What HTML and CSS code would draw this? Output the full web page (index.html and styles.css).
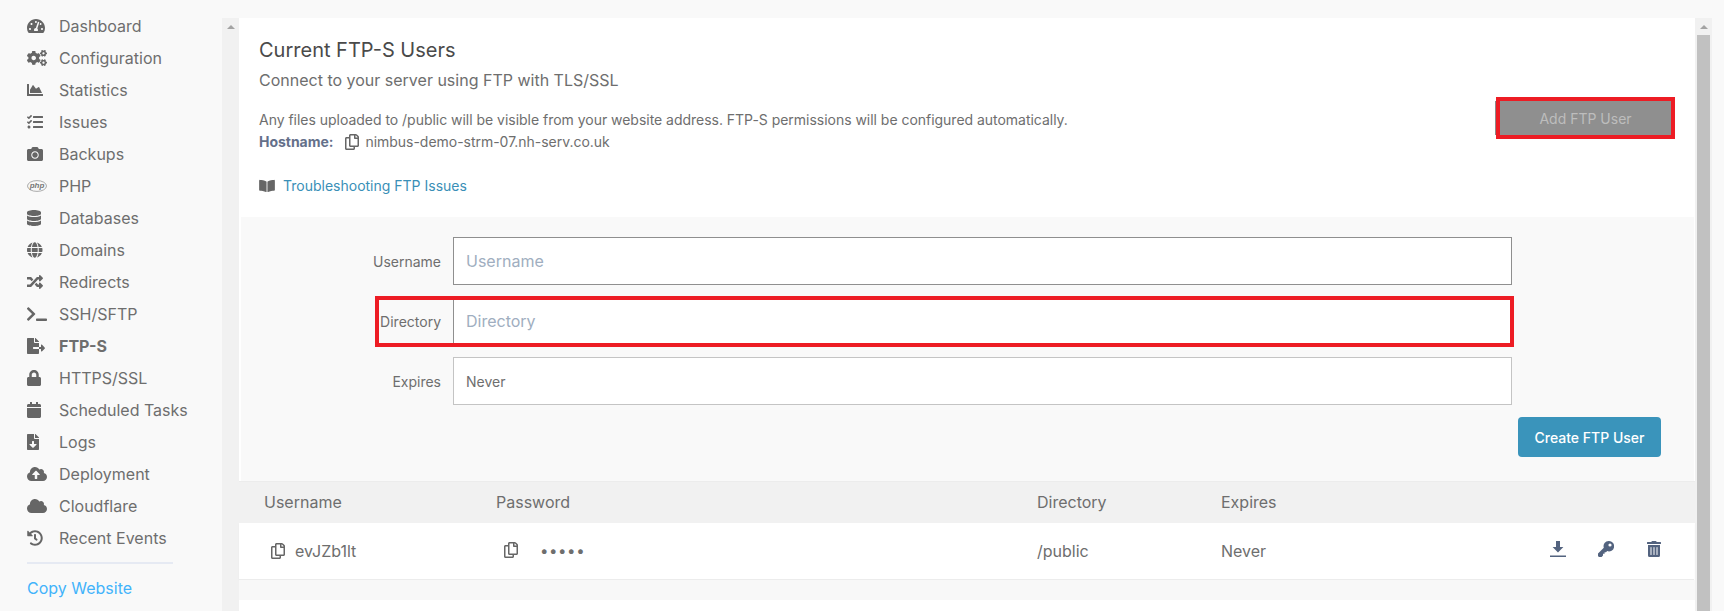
FILE: index.html
```html
<!DOCTYPE html>
<html lang="en">
<head>
<meta charset="utf-8">
<title>FTP-S Users</title>
<link rel="stylesheet" href="styles.css">
</head>
<body>
<svg class="defs" aria-hidden="true">
  <symbol id="i-copy" viewBox="0 0 448 512"><path d="M433.941 65.941l-51.882-51.882A48 48 0 0 0 348.118 0H176c-26.51 0-48 21.49-48 48v48H48c-26.51 0-48 21.49-48 48v320c0 26.51 21.49 48 48 48h224c26.51 0 48-21.49 48-48v-48h80c26.51 0 48-21.49 48-48V99.882a48 48 0 0 0-14.059-33.941zM266 464H54a6 6 0 0 1-6-6V150a6 6 0 0 1 6-6h74v224c0 26.51 21.49 48 48 48h96v42a6 6 0 0 1-6 6zm128-96H182a6 6 0 0 1-6-6V54a6 6 0 0 1 6-6h106v88c0 13.255 10.745 24 24 24h88v202a6 6 0 0 1-6 6zm6-256h-64V48h9.632c1.591 0 3.117.632 4.243 1.757l48.368 48.368a6 6 0 0 1 1.757 4.243V112z"/></symbol>
</svg>
<div class="shell">
  <aside class="sidebar">
    <nav class="nav">
      <a class="nav-item"><span class="nav-icon"><svg class="ic" viewBox="0 0 576 512"><path d="M288 32C128.94 32 0 160.94 0 320c0 52.8 14.25 102.26 39.06 144.8 5.61 9.62 16.3 15.2 27.44 15.2h443c11.14 0 21.83-5.58 27.44-15.2C561.75 422.26 576 372.8 576 320c0-159.06-128.94-288-288-288zm0 64c14.71 0 26.58 10.13 30.32 23.65-1.11 2.26-2.64 4.23-3.39 6.67l-9.22 27.67c-5.13 3.49-10.97 6.01-17.71 6.01-17.67 0-32-14.33-32-32S270.33 96 288 96zM96 384c-17.67 0-32-14.33-32-32s14.33-32 32-32 32 14.33 32 32-14.33 32-32 32zm48-160c-17.67 0-32-14.33-32-32s14.33-32 32-32 32 14.33 32 32-14.33 32-32 32zm246.77-72.41l-61.33 184C343.13 347.33 352 364.54 352 384c0 11.72-3.38 22.55-8.88 32H232.88c-5.5-9.45-8.88-20.28-8.88-32 0-33.94 26.5-61.43 59.9-63.59l61.34-184.01c4.17-12.56 17.73-19.45 30.36-15.17 12.57 4.19 19.35 17.79 15.17 30.36zm14.66 57.2l15.52-46.55c3.47-1.29 7.13-2.23 11.05-2.23 17.67 0 32 14.33 32 32s-14.33 32-32 32c-11.38-.01-20.89-6.28-26.57-15.22zM480 384c-17.67 0-32-14.33-32-32s14.33-32 32-32 32 14.33 32 32-14.33 32-32 32z"/></svg></span>Dashboard</a>
      <a class="nav-item"><span class="nav-icon"><svg class="ic" viewBox="0 0 640 512"><path d="M512.1 191l-8.2 14.3c-3 5.3-9.4 7.5-15.1 5.4-11.8-4.4-22.6-10.7-32.1-18.6-4.6-3.8-5.8-10.5-2.8-15.7l8.2-14.3c-6.9-8-12.3-17.3-15.9-27.4h-16.5c-6 0-11.2-4.3-12.2-10.3-2-12-2.1-24.6 0-37.1 1-6 6.2-10.4 12.2-10.4h16.5c3.6-10.1 9-19.4 15.9-27.4l-8.2-14.3c-3-5.2-1.9-11.9 2.8-15.7 9.5-7.9 20.4-14.2 32.1-18.6 5.7-2.1 12.1.1 15.1 5.4l8.2 14.3c10.5-1.9 21.2-1.9 31.7 0L552 6.3c3-5.3 9.4-7.5 15.1-5.4 11.8 4.4 22.6 10.7 32.1 18.6 4.6 3.8 5.8 10.5 2.8 15.7l-8.2 14.3c6.9 8 12.3 17.3 15.9 27.4h16.5c6 0 11.2 4.3 12.2 10.3 2 12 2.1 24.6 0 37.1-1 6-6.2 10.4-12.2 10.4h-16.5c-3.6 10.1-9 19.4-15.9 27.4l8.2 14.3c3 5.2 1.9 11.9-2.8 15.7-9.5 7.9-20.4 14.2-32.1 18.6-5.7 2.1-12.1-.1-15.1-5.4l-8.2-14.3c-10.4 1.9-21.2 1.9-31.7 0zm-10.5-58.8c38.5 29.6 82.4-14.3 52.8-52.8-38.5-29.7-82.4 14.3-52.8 52.8zM386.3 286.1l33.7 16.8c10.1 5.8 14.5 18.1 10.5 29.1-8.9 24.2-26.4 46.4-42.6 65.8-7.4 8.9-20.2 11.1-30.3 5.3l-29.1-16.8c-16 13.7-34.6 24.6-54.9 31.7v33.6c0 11.6-8.3 21.6-19.7 23.6-24.6 4.2-50.4 4.4-75.9 0-11.5-2-20-11.9-20-23.6V418c-20.3-7.2-38.9-18-54.9-31.7L74 403c-10 5.8-22.9 3.6-30.3-5.3-16.2-19.4-33.3-41.6-42.2-65.7-4-10.9.4-23.2 10.5-29.1l33.3-16.8c-3.9-20.9-3.9-42.4 0-63.4L12 205.8c-10.1-5.8-14.6-18.1-10.5-29 8.9-24.2 26-46.4 42.2-65.8 7.4-8.9 20.2-11.1 30.3-5.3l29.1 16.8c16-13.7 34.6-24.6 54.9-31.7V57.1c0-11.5 8.2-21.5 19.6-23.5 24.6-4.2 50.5-4.4 76-.1 11.5 2 20 11.9 20 23.6v33.6c20.3 7.2 38.9 18 54.9 31.7l29.1-16.8c10-5.8 22.9-3.6 30.3 5.3 16.2 19.4 33.2 41.6 42.1 65.8 4 10.9.1 23.2-10 29.1l-33.7 16.8c3.9 21 3.9 42.5 0 63.5zm-117.6 21.1c59.2-77-28.7-164.9-105.7-105.7-59.2 77 28.7 164.9 105.7 105.7zm243.4 182.7l-8.2 14.3c-3 5.3-9.4 7.5-15.1 5.4-11.8-4.4-22.6-10.7-32.1-18.6-4.6-3.8-5.8-10.5-2.8-15.7l8.2-14.3c-6.9-8-12.3-17.3-15.9-27.4h-16.5c-6 0-11.2-4.3-12.2-10.3-2-12-2.1-24.6 0-37.1 1-6 6.2-10.4 12.2-10.4h16.5c3.6-10.1 9-19.4 15.9-27.4l-8.2-14.3c-3-5.2-1.9-11.9 2.8-15.7 9.5-7.9 20.4-14.2 32.1-18.6 5.7-2.1 12.1.1 15.1 5.4l8.2 14.3c10.5-1.9 21.2-1.9 31.7 0l8.2-14.3c3-5.3 9.4-7.5 15.1-5.4 11.8 4.4 22.6 10.7 32.1 18.6 4.6 3.8 5.8 10.5 2.8 15.7l-8.2 14.3c6.9 8 12.3 17.3 15.9 27.4h16.5c6 0 11.2 4.3 12.2 10.3 2 12 2.1 24.6 0 37.1-1 6-6.2 10.4-12.2 10.4h-16.5c-3.6 10.1-9 19.4-15.9 27.4l8.2 14.3c3 5.2 1.9 11.9-2.8 15.7-9.5 7.9-20.4 14.2-32.1 18.6-5.7 2.1-12.1-.1-15.1-5.4l-8.2-14.3c-10.4 1.9-21.2 1.9-31.7 0zM501.6 431c38.5 29.6 82.4-14.3 52.8-52.8-38.5-29.6-82.4 14.3-52.8 52.8z"/></svg></span>Configuration</a>
      <a class="nav-item"><span class="nav-icon"><svg class="ic" viewBox="0 0 512 512"><path d="M500 384c6.6 0 12 5.4 12 12v40c0 6.6-5.4 12-12 12H12c-6.6 0-12-5.4-12-12V76c0-6.6 5.4-12 12-12h40c6.6 0 12 5.4 12 12v308h436zM372.7 159.5L288 216l-85.3-113.7c-5.1-6.8-15.5-6.3-19.9 1L96 248v104h384l-89.9-187.8c-3.2-6.5-11.4-8.7-17.4-4.7z"/></svg></span>Statistics</a>
      <a class="nav-item"><span class="nav-icon"><svg class="ic" viewBox="0 0 512 512"><path d="M139.61 35.5a12 12 0 0 0-17 0L58.93 98.81l-22.7-22.12a12 12 0 0 0-17 0L3.53 92.41a12 12 0 0 0 0 17l47.59 47.4a12.78 12.78 0 0 0 17.61 0l15.59-15.62L156.52 69a12.09 12.09 0 0 0 .09-17zm0 159.19a12 12 0 0 0-17 0l-63.68 63.72-22.7-22.1a12 12 0 0 0-17 0L3.53 252a12 12 0 0 0 0 17L51 316.5a12.77 12.77 0 0 0 17.6 0l15.7-15.69 72.2-72.22a12 12 0 0 0 .09-16.9zM64 368c-26.49 0-48.59 21.5-48.59 48S37.53 464 64 464a48 48 0 0 0 0-96zm432 16H208a16 16 0 0 0-16 16v32a16 16 0 0 0 16 16h288a16 16 0 0 0 16-16v-32a16 16 0 0 0-16-16zm0-320H208a16 16 0 0 0-16 16v32a16 16 0 0 0 16 16h288a16 16 0 0 0 16-16V80a16 16 0 0 0-16-16zm0 160H208a16 16 0 0 0-16 16v32a16 16 0 0 0 16 16h288a16 16 0 0 0 16-16v-32a16 16 0 0 0-16-16z"/></svg></span>Issues</a>
      <a class="nav-item"><span class="nav-icon"><svg class="ic" viewBox="0 0 512 512"><path d="M512 144v288c0 26.5-21.5 48-48 48H48c-26.5 0-48-21.5-48-48V144c0-26.5 21.5-48 48-48h88l12.3-32.9c7-18.7 24.9-31.1 44.9-31.1h125.5c20 0 37.9 12.4 44.9 31.1L376 96h88c26.5 0 48 21.5 48 48zM376 288c0-66.2-53.8-120-120-120s-120 53.8-120 120 53.8 120 120 120 120-53.8 120-120zm-32 0c0 48.5-39.5 88-88 88s-88-39.5-88-88 39.5-88 88-88 88 39.5 88 88z"/></svg></span>Backups</a>
      <a class="nav-item"><span class="nav-icon"><svg class="ic ic-php" viewBox="0 0 20 12"><ellipse cx="10" cy="6" rx="9.5" ry="5.4"/><text x="10" y="8.4" text-anchor="middle">php</text></svg></span>PHP</a>
      <a class="nav-item"><span class="nav-icon"><svg class="ic" viewBox="0 0 448 512"><path d="M448 73.143v45.714C448 159.143 347.667 192 224 192S0 159.143 0 118.857V73.143C0 32.857 100.333 0 224 0s224 32.857 224 73.143zM448 176v102.857C448 319.143 347.667 352 224 352S0 319.143 0 278.857V176c48.125 33.143 136.208 48.572 224 48.572S399.874 209.143 448 176zm0 160v102.857C448 479.143 347.667 512 224 512S0 479.143 0 438.857V336c48.125 33.143 136.208 48.572 224 48.572S399.874 369.143 448 336z"/></svg></span>Databases</a>
      <a class="nav-item"><span class="nav-icon"><svg class="ic" viewBox="0 0 496 512"><path d="M336.5 160C322 70.7 287.8 8 248 8s-74 62.7-88.5 152h177zM152 256c0 22.2 1.2 43.5 3.3 64h185.3c2.1-20.5 3.3-41.8 3.3-64s-1.2-43.5-3.3-64H155.3c-2.1 20.5-3.3 41.8-3.3 64zm324.7-96c-28.6-67.9-86.5-120.4-158-141.6 24.4 33.8 41.2 84.7 50 141.6h108zM177.2 18.4C105.8 39.6 47.8 92.1 19.3 160h108c8.7-56.9 25.5-107.8 49.9-141.6zM487.4 192H372.7c2.1 21 3.3 42.5 3.3 64s-1.2 43-3.3 64h114.6c5.5-20.5 8.6-41.8 8.6-64s-3.1-43.5-8.5-64zM120 256c0-21.5 1.2-43 3.3-64H8.6C3.2 212.5 0 233.8 0 256s3.2 43.5 8.6 64h114.6c-2-21-3.2-42.5-3.2-64zm39.5 96c14.5 89.3 48.7 152 88.5 152s74-62.7 88.5-152h-177zm159.3 141.6c71.4-21.2 129.4-73.7 158-141.6h-108c-8.8 56.9-25.6 107.8-50 141.6zM19.3 352c28.6 67.9 86.5 120.4 158 141.6-24.4-33.8-41.2-84.7-50-141.6h-108z"/></svg></span>Domains</a>
      <a class="nav-item"><span class="nav-icon"><svg class="ic" viewBox="0 0 512 512"><path d="M504.971 359.029c9.373 9.373 9.373 24.569 0 33.941l-80 79.984c-15.01 15.01-40.971 4.49-40.971-16.971V416h-58.785a12.004 12.004 0 0 1-8.773-3.812l-70.556-75.596 53.333-57.143L352 336h32v-39.981c0-21.438 25.943-31.998 40.971-16.971l80 79.981zM12 176h84l52.781 56.551 53.333-57.143-70.556-75.596A11.999 11.999 0 0 0 122.785 96H12c-6.627 0-12 5.373-12 12v56c0 6.627 5.373 12 12 12zm372 0v39.984c0 21.46 25.961 31.98 40.971 16.971l80-79.984c9.373-9.373 9.373-24.569 0-33.941l-80-79.981C409.943 24.021 384 34.582 384 56.019V96h-58.785a12.004 12.004 0 0 0-8.773 3.812L96 336H12c-6.627 0-12 5.373-12 12v56c0 6.627 5.373 12 12 12h110.785c3.326 0 6.503-1.381 8.773-3.812L352 176h32z"/></svg></span>Redirects</a>
      <a class="nav-item"><span class="nav-icon"><svg class="ic" viewBox="0 0 640 512"><path d="M257.981 272.971L63.638 467.314c-9.373 9.373-24.569 9.373-33.941 0L7.029 444.647c-9.357-9.357-9.375-24.522-.04-33.901L161.011 256 6.99 101.255c-9.335-9.379-9.317-24.544.04-33.901l22.667-22.667c9.373-9.373 24.569-9.373 33.941 0L257.981 239.03c9.373 9.372 9.373 24.568 0 33.941zM640 456v-32c0-13.255-10.745-24-24-24H312c-13.255 0-24 10.745-24 24v32c0 13.255 10.745 24 24 24h304c13.255 0 24-10.745 24-24z"/></svg></span>SSH/SFTP</a>
      <a class="nav-item nav-item-active"><span class="nav-icon"><svg class="ic" viewBox="0 0 576 512"><path d="M384 121.9c0-6.3-2.5-12.4-7-16.9L279.1 7c-4.5-4.5-10.6-7-17-7H256v128h128zM571 308l-95.7-96.4c-10.1-10.1-27.4-3-27.4 11.3V288h-64v64h64v65.2c0 14.3 17.3 21.4 27.4 11.3L571 332c6.6-6.6 6.6-17.4 0-24zm-379 28v-32c0-8.8 7.2-16 16-16h176V160H248c-13.2 0-24-10.8-24-24V0H24C10.7 0 0 10.7 0 24v464c0 13.3 10.7 24 24 24h336c13.3 0 24-10.7 24-24V352H208c-8.8 0-16-7.2-16-16z"/></svg></span>FTP-S</a>
      <a class="nav-item"><span class="nav-icon"><svg class="ic" viewBox="0 0 448 512"><path d="M400 224h-24v-72C376 68.2 307.8 0 224 0S72 68.2 72 152v72H48c-26.5 0-48 21.5-48 48v192c0 26.5 21.5 48 48 48h352c26.5 0 48-21.5 48-48V272c0-26.5-21.5-48-48-48zm-104 0H152v-72c0-39.7 32.3-72 72-72s72 32.3 72 72v72z"/></svg></span>HTTPS/SSL</a>
      <a class="nav-item"><span class="nav-icon"><svg class="ic" viewBox="0 0 448 512"><path d="M12 192h424c6.6 0 12 5.4 12 12v260c0 26.5-21.5 48-48 48H48c-26.5 0-48-21.5-48-48V204c0-6.6 5.4-12 12-12zm436-44v-36c0-26.5-21.5-48-48-48h-48V12c0-6.6-5.4-12-12-12h-40c-6.6 0-12 5.4-12 12v52H160V12c0-6.6-5.4-12-12-12h-40c-6.6 0-12 5.4-12 12v52H48C21.5 64 0 85.5 0 112v36c0 6.6 5.4 12 12 12h424c6.6 0 12-5.4 12-12z"/></svg></span>Scheduled Tasks</a>
      <a class="nav-item"><span class="nav-icon"><svg class="ic" viewBox="0 0 384 512"><path d="M224 136V0H24C10.7 0 0 10.7 0 24v464c0 13.3 10.7 24 24 24h336c13.3 0 24-10.7 24-24V160H248c-13.2 0-24-10.8-24-24zm76.45 211.36l-96.42 95.7c-6.65 6.61-17.39 6.61-24.04 0l-96.42-95.7C73.42 337.29 80.54 320 94.82 320H160v-80c0-8.84 7.16-16 16-16h32c8.84 0 16 7.16 16 16v80h65.18c14.28 0 21.4 17.29 11.27 27.36zM377 105L279.1 7c-4.5-4.5-10.6-7-17-7H256v128h128v-6.1c0-6.3-2.5-12.4-7-16.9z"/></svg></span>Logs</a>
      <a class="nav-item"><span class="nav-icon"><svg class="ic" viewBox="0 0 640 512"><path d="M537.6 226.6c4.1-10.7 6.4-22.4 6.4-34.6 0-53-43-96-96-96-19.7 0-38.1 6-53.3 16.2C367 64.2 315.3 32 256 32c-88.4 0-160 71.6-160 160 0 2.7.1 5.4.2 8.1C40.2 219.8 0 273.2 0 336c0 79.5 64.5 144 144 144h368c70.7 0 128-57.3 128-128 0-61.9-44-113.6-102.4-125.4zM393.4 288H328v112c0 8.8-7.2 16-16 16h-48c-8.8 0-16-7.2-16-16V288h-65.4c-14.3 0-21.4-17.2-11.3-27.3l105.4-105.4c6.2-6.2 16.4-6.2 22.6 0l105.4 105.4c10.1 10.1 2.9 27.3-11.3 27.3z"/></svg></span>Deployment</a>
      <a class="nav-item"><span class="nav-icon"><svg class="ic" viewBox="0 0 640 512"><path d="M537.6 226.6c4.1-10.7 6.4-22.4 6.4-34.6 0-53-43-96-96-96-19.7 0-38.1 6-53.3 16.2C367 64.2 315.3 32 256 32c-88.4 0-160 71.6-160 160 0 2.7.1 5.4.2 8.1C40.2 219.8 0 273.2 0 336c0 79.5 64.5 144 144 144h368c70.7 0 128-57.3 128-128 0-61.9-44-113.6-102.4-125.4z"/></svg></span>Cloudflare</a>
      <a class="nav-item"><span class="nav-icon"><svg class="ic" viewBox="0 0 512 512"><path d="M504 255.531c.253 136.64-111.18 248.372-247.82 248.468-59.015.042-113.223-20.53-155.822-54.911-11.077-8.94-11.905-25.541-1.839-35.607l11.267-11.267c8.609-8.609 22.353-9.551 31.891-1.984C173.062 425.135 212.781 440 256 440c101.705 0 184-82.311 184-184 0-101.705-82.311-184-184-184-48.814 0-93.149 18.969-126.068 49.932l50.754 50.754c10.08 10.08 2.941 27.314-11.313 27.314H24c-8.837 0-16-7.163-16-16V38.627c0-14.254 17.234-21.393 27.314-11.314l49.372 49.372C129.209 34.136 189.552 8 256 8c136.81 0 247.747 110.78 248 247.531zm-180.912 78.784l9.823-12.63c8.138-10.463 6.253-25.542-4.21-33.679L288 256.349V152c0-13.255-10.745-24-24-24h-16c-13.255 0-24 10.745-24 24v135.651l65.409 50.874c10.463 8.137 25.541 6.253 33.679-4.21z"/></svg></span>Recent Events</a>
    </nav>
    <a class="copy-link">Copy Website</a>
  </aside>

  <div class="viewport">
    <div class="scrollbar"><span class="scroll-arrow"></span></div>
    <main class="panel">
      <section class="intro">
        <div class="intro-text">
          <h1 class="title">Current FTP-S Users</h1>
          <p class="subtitle">Connect to your server using FTP with TLS/SSL</p>
          <p class="note">Any files uploaded to /public will be visible from your website address. FTP-S permissions will be configured automatically.</p>
          <p class="host"><strong class="host-label">Hostname:</strong><svg class="ic-copy"><use href="#i-copy"/></svg>nimbus-demo-strm-07.nh-serv.co.uk</p>
          <p class="help"><svg class="ic-book" viewBox="0 0 576 512"><path d="M542.22 32.05c-54.8 3.11-163.72 14.43-230.96 55.59-4.64 2.84-7.27 7.89-7.27 13.17v363.87c0 11.55 12.63 18.85 23.28 13.49 69.18-34.82 169.23-44.32 218.7-46.92 16.89-.89 30.02-14.43 30.02-30.66V62.75c.01-17.71-15.35-31.74-33.77-30.7zM264.73 87.64C197.5 46.48 88.58 35.17 33.78 32.05 15.36 31.01 0 45.04 0 62.75V400.6c0 16.24 13.13 29.78 30.02 30.66 49.49 2.6 149.59 12.11 218.77 46.95 10.62 5.35 23.21-1.94 23.21-13.46V100.63c0-5.29-2.62-10.09-7.27-12.99z"/></svg><a class="help-link">Troubleshooting FTP Issues</a></p>
        </div>
        <button class="btn-add" type="button">Add FTP User</button>
      </section>

      <form class="form">
        <div class="field">
          <label class="field-label">Username</label>
          <input class="field-input field-input-hover" placeholder="Username">
        </div>
        <div class="field field-marked">
          <label class="field-label">Directory</label>
          <input class="field-input field-input-hover" placeholder="Directory">
        </div>
        <div class="field">
          <label class="field-label">Expires</label>
          <input class="field-input field-input-value" value="Never">
        </div>
        <div class="form-actions"><button class="btn-create" type="button">Create FTP User</button></div>
      </form>

      <div class="table">
        <div class="table-row table-head">
          <span>Username</span><span>Password</span><span>Directory</span><span>Expires</span><span></span>
        </div>
        <div class="table-row table-body">
          <span class="cell-user"><svg class="ic-copy"><use href="#i-copy"/></svg>evJZb1lt</span>
          <span class="cell-pass"><svg class="ic-copy"><use href="#i-copy"/></svg><span class="dots">•••••</span></span>
          <span>/public</span>
          <span>Never</span>
          <span class="actions">
            <svg class="ic-act" viewBox="0 0 16 16"><path d="M6 0h4v6h3.4L8 11.5 2.6 6H6zM0 14.4h16V16H0z"/></svg>
            <svg class="ic-act" viewBox="0 0 16 16"><path d="M10.8 0a5.2 5.2 0 1 1-1.6 10.1L8 11.3H6.6v1.5H5v1.6L3.6 16H.9L0 15.1v-2.5l5.8-5.8A5.2 5.2 0 0 1 10.8 0zm1.2 2.4a1.6 1.6 0 1 0 0 3.2 1.6 1.6 0 0 0 0-3.2z"/></svg>
            <svg class="ic-act" viewBox="0 0 448 512"><path d="M32 464a48 48 0 0 0 48 48h288a48 48 0 0 0 48-48V128H32zm272-256a16 16 0 0 1 32 0v224a16 16 0 0 1-32 0zm-96 0a16 16 0 0 1 32 0v224a16 16 0 0 1-32 0zm-96 0a16 16 0 0 1 32 0v224a16 16 0 0 1-32 0zM432 32H312l-9.4-18.7A24 24 0 0 0 281.1 0H166.8a23.72 23.72 0 0 0-21.4 13.3L136 32H16A16 16 0 0 0 0 48v32a16 16 0 0 0 16 16h416a16 16 0 0 0 16-16V48a16 16 0 0 0-16-16z"/></svg>
          </span>
        </div>
      </div>
      <div class="spacer"></div>
    </main>
    <div class="scrollbar scrollbar-right"><span class="scroll-arrow"></span><span class="scroll-thumb"></span></div>
  </div>
</div>
</body>
</html>
```

FILE: styles.css
```css
*, *::after { box-sizing: border-box; }

html, body {
  margin: 0;
  height: 611px;
  overflow: hidden;
}

body {
  background: #f9f9f9;
  color: #6e6e6e;
  font-family: Inter, "Liberation Sans", sans-serif;
  font-size: 14px;
}

.defs { display: none; }

.shell {
  display: flex;
  height: 611px;
}

/* sidebar */
.sidebar {
  flex: 0 0 222px;
  padding: 10px 0 0 27px;
}

.nav { display: flex; flex-direction: column; }

.nav-item {
  display: flex;
  align-items: center;
  height: 32px;
  font-size: 16px;
}

.nav-item-active { font-weight: 700; }

.nav-icon {
  flex: 0 0 32px;
  display: flex;
  align-items: center;
}

.ic { height: 16px; width: auto; fill: #666; display: block; }

.ic-php { height: 12px; fill: none; }
.ic-php ellipse { stroke: #8a8a8a; stroke-width: .7; }
.ic-php text {
  fill: #777;
  font-family: "Liberation Sans", sans-serif;
  font-size: 8px;
  font-style: italic;
  font-weight: 700;
}

.copy-link {
  display: block;
  width: 146px;
  margin-top: 8px;
  padding-top: 15px;
  border-top: 2px solid #e6eaf3;
  color: #42b3fb;
  font-size: 16px;
  line-height: 19px;
}

/* main viewport */
.viewport {
  flex: 0 0 1490px;
  display: flex;
  margin-top: 18px;
  height: 593px;
}

.scrollbar {
  flex: 0 0 17px;
  background: #f1f1f1;
  padding-top: 7px;
  display: flex;
  flex-direction: column;
  align-items: center;
}

.scroll-arrow {
  width: 0;
  height: 0;
  border: 4px solid transparent;
  border-top: 0;
  border-bottom: 4px solid #a3a3a3;
}

.scroll-thumb {
  flex: 1;
  width: 13px;
  margin-top: 6px;
  background: #c1c1c1;
}

.panel {
  flex: 0 0 1456px;
  background: #fff;
  display: flex;
  flex-direction: column;
}

/* intro */
.intro {
  flex: 0 0 199px;
  display: flex;
  justify-content: space-between;
  align-items: flex-start;
  padding: 20px 24px 0 20px;
}

.title {
  margin: 0;
  color: #4a4a4a;
  font-size: 20px;
  font-weight: 400;
  line-height: 24px;
}

.subtitle {
  margin: 7px 0 0;
  font-size: 16px;
  line-height: 22px;
}

.note {
  margin: 18px 0 0;
  line-height: 22px;
  letter-spacing: -.025px;
}

.host {
  display: flex;
  align-items: center;
  margin: 0;
  line-height: 22px;
  letter-spacing: -.025px;
}

.host-label { color: #64708a; margin-right: 12px; }

.ic-copy {
  width: 14px;
  height: 16px;
  fill: #666;
  flex: none;
}

.host .ic-copy { margin-right: 6px; }

.help {
  display: flex;
  align-items: center;
  margin: 22px 0 0;
  line-height: 22px;
}

.ic-book { width: 16px; height: 14px; fill: #666; margin-right: 8px; }

.help-link { color: #3a8fb7; }

.btn-add {
  width: 171px;
  height: 34px;
  margin-top: 63px;
  border: 0;
  background: #8f8f8f;
  color: #bdbdbd;
  font: 14px Inter, "Liberation Sans", sans-serif;
  outline: 4px solid #ed1c24;
  box-shadow: -5px 0 0 #8a8a8a;
}

/* form */
.form {
  flex: 0 0 264px;
  margin: 0 1px 0 2px;
  padding: 20px 33px 0 0;
  background: #f9f9f9;
}

.field {
  position: relative;
  display: grid;
  grid-template-columns: 200px 1059px;
  column-gap: 12px;
  align-items: center;
  margin-bottom: 12px;
  justify-content: start;
}

.field-label { text-align: right; }

.field-marked::after {
  content: "";
  position: absolute;
  left: 134px;
  top: -1px;
  width: 1139px;
  height: 51px;
  border: 4px solid #ed1c24;
  pointer-events: none;
}

.field-input {
  height: 48px;
  padding: 0 12px;
  border: 1px solid #c4c4c4;
  background: #fff;
  color: #6e6e6e;
  font: 16px Inter, "Liberation Sans", sans-serif;
}

.field-input::placeholder { color: #a0aec0; opacity: 1; }

.field-input-hover { border-color: #8f8f8f; }
.field-input-value { font-size: 14px; }

.form-actions {
  display: flex;
  justify-content: flex-end;
}

.btn-create {
  width: 143px;
  height: 40px;
  border: 0;
  border-radius: 4px;
  background: #3a94bb;
  color: #fff;
  font: 500 14px Inter, "Liberation Sans", sans-serif;
}

/* table */
.table-row {
  display: grid;
  grid-template-columns: 232px 541px 184px 1fr auto;
  align-items: center;
  padding: 0 33px 0 25px;
  font-size: 16px;
}

.table-head {
  height: 42px;
  padding-bottom: 2px;
  background: #f1f1f1;
  border-top: 1px solid #ececec;
}

.table-body {
  height: 57px;
  margin-right: 1px;
  padding-right: 32px;
  background: #fff;
  border-bottom: 1px solid #ececec;
  box-shadow: 0 1px 2px rgba(0, 0, 0, .03);
}

.cell-user, .cell-pass { display: flex; align-items: center; }

.cell-user { padding-left: 7px; }
.cell-user .ic-copy { margin-right: 10px; }

.cell-pass { padding-left: 8px; margin-top: -3px; }
.cell-pass .ic-copy { margin-right: 22px; }

.dots {
  margin-top: 3px;
  font-size: 15px;
  letter-spacing: .6px;
  line-height: 16px;
}

.actions {
  display: flex;
  gap: 32px;
  align-items: center;
  margin-top: -4px;
}

.ic-act { width: 16px; height: 16px; fill: #53637f; flex: none; }

.spacer {
  flex: 0 0 20px;
  background: #f8f8f8;
}
```
